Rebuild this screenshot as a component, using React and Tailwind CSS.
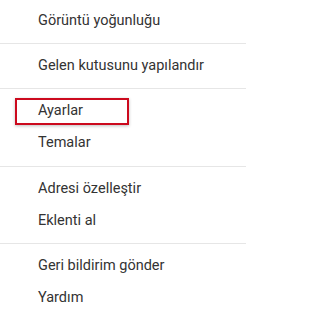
import React from "react";

const sections = [
  { pt: "pt-[5px]", pb: "pb-[6px]", items: ["Görüntü yoğunluğu"] },
  { pt: "pt-[6px]", pb: "pb-[6px]", items: ["Gelen kutusunu yapılandır"] },
  { pt: "pt-[6px]", pb: "pb-[7px]", items: ["Ayarlar", "Temalar"], marked: "Ayarlar" },
  { pt: "pt-[6px]", pb: "pb-[6px]", items: ["Adresi özelleştir", "Eklenti al"] },
  { pt: "pt-[6px]", pb: "pb-[6px]", items: ["Geri bildirim gönder", "Yardım"] },
];

const App = () => {
  return (
    <div
      className="w-[246px] h-[319px] overflow-hidden bg-white text-[#333333]"
      style={{ fontFamily: "Roboto, 'Liberation Sans', sans-serif" }}
    >
      {sections.map((section, i) => (
        <div
          key={i}
          className={`${section.pt} ${section.pb} ${
            i < sections.length - 1 ? "border-b border-[#e6e6e6]" : ""
          }`}
        >
          {section.items.map((item) => (
            <div key={item} className="relative h-8 flex items-center pl-[38px] text-[14.5px]">
              {item}
              {section.marked === item && (
                <div className="absolute left-[15px] top-[3px] w-[114px] h-[27px] border-2 border-[#cc0a1e] shadow-[0_1px_3px_rgba(0,0,0,0.25)]" />
              )}
            </div>
          ))}
        </div>
      ))}
    </div>
  );
};

export default App;
